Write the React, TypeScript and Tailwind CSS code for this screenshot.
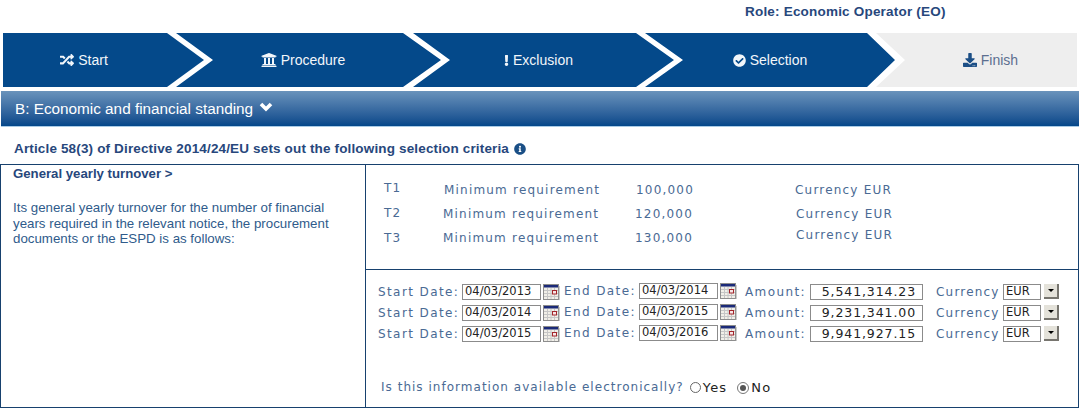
import { FaCheckCircle, FaDownload, FaExclamation, FaInfoCircle, FaRandom, FaUniversity } from 'react-icons/fa';

const arial = "font-['Liberation_Sans',Arial,sans-serif]";
const verdana = "font-['DejaVu_Sans',Verdana,sans-serif]";

const steps = [
  { label: 'Start', icon: <FaRandom className="w-[14px] h-[14px]" />, box: 'w-[201px] pr-[39px] bg-[#04498a] text-[#f2f6fa] [clip-path:polygon(0_0,164px_0,201px_50%,164px_100%,0_100%)]' },
  { label: 'Procedure', icon: <FaUniversity className="w-[16px] h-[16px]" />, box: 'w-[265px] -ml-[28px] pr-[11px] bg-[#04498a] text-[#f2f6fa] [clip-path:polygon(0_0,227px_0,265px_50%,227px_100%,0_100%,37px_50%)]' },
  { label: 'Exclusion', icon: <FaExclamation className="w-[5px] h-[11px]" />, box: 'w-[261px] -ml-[28px] pr-[10px] bg-[#04498a] text-[#f2f6fa] [clip-path:polygon(0_0,223px_0,261px_50%,223px_100%,0_100%,37px_50%)]' },
  { label: 'Selection', icon: <FaCheckCircle className="w-[13px] h-[13px]" />, box: 'w-[250px] -ml-[29px] bg-[#04498a] text-[#f2f6fa] [clip-path:polygon(0_0,222px_0,250px_50%,222px_100%,0_100%,38px_50%)]' },
  { label: 'Finish', icon: <FaDownload className="w-[14px] h-[14px] text-[#1c4f86]" />, box: 'w-[201px] -ml-[19px] pl-[28px] bg-[#eeeeee] text-[#5c6f90] [clip-path:polygon(0_0,201px_0,201px_100%,0_100%,29px_50%)]' },
];

const requirements = [
  { id: 'T1', idTop: 'mt-[0px]', minTop: 'mt-[2px] ml-[50px]', amount: '100,000', amountTop: 'mt-[2px]', curTop: 'mt-[2px] ml-[101px]' },
  { id: 'T2', idTop: 'mt-[0px]', minTop: 'mt-[1px] ml-[49px]', amount: '120,000', amountTop: 'mt-[1px]', curTop: 'mt-[1px] ml-[103px]' },
  { id: 'T3', idTop: 'mt-[1px]', minTop: 'mt-[1px] ml-[49px]', amount: '130,000', amountTop: 'mt-[1px]', curTop: '-mt-[2px] ml-[103px]' },
];

const periods = [
  { start: '04/03/2013', end: '04/03/2014', amount: '5,541,314.23' },
  { start: '04/03/2014', end: '04/03/2015', amount: '9,231,341.00' },
  { start: '04/03/2015', end: '04/03/2016', amount: '9,941,927.15' },
];

function CalendarIcon() {
  return (
    <svg width="17" height="16" viewBox="0 0 17 16" className="shrink-0">
      <rect x="0.5" y="0.5" width="15" height="15" fill="#f1efe8" stroke="#8d8d8d" />
      <rect x="1" y="1" width="14" height="2.5" fill="#1b2a78" />
      <path d="M1 6.5H15M1 9.5H15M1 12.5H15M4.5 4V15M8 4V15M11.5 4V15" stroke="#c6c6c6" strokeWidth="1" />
      <rect x="9.5" y="6.5" width="4" height="3.5" fill="#f7e6e6" stroke="#a3252b" />
      <rect x="15.5" y="2" width="1" height="14" fill="#9a9a9a" />
    </svg>
  );
}

function Field({ value, className }: { value: string; className: string }) {
  return <div className={`h-[16px] border border-[#8b8b8b] bg-white text-[#222222] flex items-center ${className}`}>{value}</div>;
}

function PeriodRow({ start, end, amount }: { start: string; end: string; amount: string }) {
  return (
    <div className="flex items-start h-[21px] text-[12px] tracking-[1.4px] text-[#4a6a94]">
      <span className="w-[84px] leading-[17px] whitespace-nowrap">Start Date:</span>
      <Field value={start} className="w-[79px] pl-[2px] text-[11.5px] tracking-[0px]" />
      <div className="ml-[2px]"><CalendarIcon /></div>
      <span className="ml-[4px] w-[75px] -mt-[1px] leading-[17px] whitespace-nowrap">End Date:</span>
      <div className="-mt-[1px]"><Field value={end} className="w-[79px] pl-[2px] text-[11.5px] tracking-[0px]" /></div>
      <div className="ml-[2px] -mt-[1px]"><CalendarIcon /></div>
      <span className="ml-[8px] w-[65px] leading-[17px]">Amount:</span>
      <Field value={amount} className="w-[113px] justify-end pr-[6px] text-[12.5px] tracking-[0.9px]" />
      <span className="ml-[13px] w-[67px] leading-[17px] tracking-[1.2px]">Currency</span>
      <Field value="EUR" className="w-[38px] pl-[2px] text-[11.5px] tracking-[0px]" />
      <div className="ml-[3px] w-[15px] h-[15px] bg-[#e4e2da] border-r-2 border-b-2 border-[#77756f] flex items-center justify-center">
        <div className="w-0 h-0 border-x-[3px] border-x-transparent border-t-[3px] border-t-black" />
      </div>
    </div>
  );
}

export default function App() {
  return (
    <div className={`${arial} w-[1082px] h-[408px] overflow-hidden bg-white flex flex-col`}>
      <div className="h-[33px] pl-[745px] pt-[4px] text-[13.5px] leading-[16px] font-bold text-[#27477c] tracking-[0.2px]">
        Role: Economic Operator (EO)
      </div>

      <div className="flex h-[54px] pl-[3px]">
        {steps.map((step) => (
          <div key={step.label} className={`flex items-center justify-center gap-[4px] text-[14px] shrink-0 ${step.box}`}>
            {step.icon}
            <span>{step.label}</span>
          </div>
        ))}
      </div>

      <div className="mt-[4px] ml-[1px] w-[1078px] h-[36px] border-b border-[#a9cbe6] bg-gradient-to-b from-[#6a93bb] to-[#03478a] pl-[14px] pt-[2px] flex items-center gap-[6px] text-white text-[15.3px]">
        <span>B: Economic and financial standing</span>
        <svg width="14" height="10" viewBox="0 0 14 10" className="-mt-[5px]">
          <path d="M2 2L7 7L12 2" fill="none" stroke="#ffffff" strokeWidth="3.6" />
        </svg>
      </div>

      <div className="h-[37px] pl-[14px] pt-[14px] flex items-start gap-[5px] text-[13.5px] leading-[16px] font-bold text-[#27477c] tracking-[0.15px]">
        <span>Article 58(3) of Directive 2014/24/EU sets out the following selection criteria</span>
        <FaInfoCircle className="w-[12px] h-[12px] mt-[2px] text-[#1a4f86]" />
      </div>

      <div className="w-[1079px] h-[244px] border border-[#17416e] flex">
        <div className="w-[365px] border-r border-[#17416e] pl-[12px] pt-[1px] text-[#2f5b8b]">
          <div className="text-[13.2px] leading-[16px] font-bold text-[#27477c]">General yearly turnover &gt;</div>
          <p className="mt-[18px] w-[330px] text-[13.3px] leading-[15.5px]">
            Its general yearly turnover for the number of financial years required in the relevant notice, the procurement documents or the ESPD is as follows:
          </p>
        </div>

        <div className={`${verdana} flex-1 flex flex-col`}>
          <div className="h-[105px] border-b border-[#17416e] pl-[18px] pt-[15px] text-[12px] leading-[17px] tracking-[1.2px] text-[#4a6a94]">
            {requirements.map((row) => (
              <div key={row.id} className="flex h-[24.5px] items-start">
                <span className={`w-[10px] whitespace-nowrap ${row.idTop}`}>{row.id}</span>
                <span className={`w-[192px] whitespace-nowrap ${row.minTop}`}>Minimum requirement</span>
                <span className={`w-[58px] ${row.amountTop}`}>{row.amount}</span>
                <span className={`whitespace-nowrap ${row.curTop}`}>Currency EUR</span>
              </div>
            ))}
          </div>

          <div className="pl-[12px] pt-[14px]">
            {periods.map((period) => (
              <PeriodRow key={period.start} {...period} />
            ))}
            <div className="mt-[32px] ml-[3px] flex items-center text-[12px] leading-[17px] tracking-[1.02px] text-[#4a6a94]">
              <span>Is this information available electronically?</span>
              <span className="ml-[6px] w-[11px] h-[11px] rounded-full border border-[#666666] bg-white" />
              <span className="ml-[2px] text-[13px] text-[#222222] tracking-[1.2px]">Yes</span>
              <span className="ml-[10px] w-[12px] h-[12px] rounded-full border border-[#777777] bg-white flex items-center justify-center">
                <span className="w-[6px] h-[6px] rounded-full bg-[#555555]" />
              </span>
              <span className="ml-[2px] text-[13px] text-[#222222] tracking-[1.2px]">No</span>
            </div>
          </div>
        </div>
      </div>
    </div>
  );
}
